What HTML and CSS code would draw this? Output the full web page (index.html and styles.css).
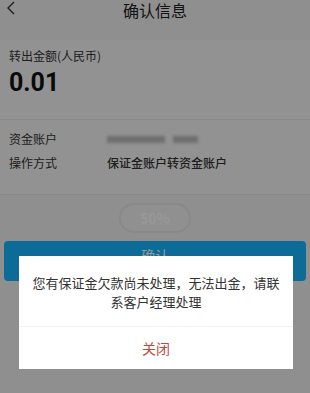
FILE: index.html
```html
<!DOCTYPE html>
<html lang="zh">
<head>
<meta charset="utf-8">
<link rel="stylesheet" href="styles.css">
</head>
<body>
<div class="page">
  <header class="nav">
    <svg class="back" width="10" height="14" viewBox="0 0 10 14"><path d="M8 1 L2 7 L8 13" fill="none" stroke="#333" stroke-width="1.4"/></svg>
    <div class="title">确认信息</div>
  </header>
  <section class="card amount">
    <div class="label">转出金额(人民币)</div>
    <div class="value">0.01</div>
  </section>
  <section class="card info">
    <div class="row"><span class="k">资金账户</span><span class="v"><span class="blur b1"></span><span class="blur b2"></span></span></div>
    <div class="row"><span class="k">操作方式</span><span class="v strong">保证金账户转资金账户</span></div>
  </section>
  <div class="progress"><span class="pill">50%</span></div>
  <div class="btn-wrap"><button class="confirm">确认</button></div>
</div>
<div class="mask"></div>
<div class="dialog">
  <div class="msg">您有保证金欠款尚未处理，无法出金，请联系客户经理处理</div>
  <div class="close">关闭</div>
</div>
</body>
</html>
```
FILE: styles.css
```css
* { box-sizing: border-box; }
html, body { margin: 0; padding: 0; }
body {
  width: 310px;
  height: 393px;
  overflow: hidden;
  background: #eeeeee;
  font-family: "Noto Sans CJK SC", "Noto Sans", sans-serif;
  color: #333;
}
.page { display: flex; flex-direction: column; }
.nav {
  height: 28px;
  position: relative;
  display: flex;
  align-items: flex-start;
  justify-content: center;
  background: #efefef;
}
.back { position: absolute; left: 6px; top: 1px; }
.title { font-size: 16px; line-height: 18px; padding-top: 1px; color: #222; }
.card { background: #f3f3f3; }
.amount {
  margin-top: 12px;
  padding: 8px 9px 0;
  height: 80px;
  border-bottom: 1px solid #e4e4e4;
}
.label { font-size: 12px; line-height: 16px; color: #333; }
.value { font-size: 25px; font-weight: 700; line-height: 30px; margin-top: 4px; color: #111; font-family: "Roboto", "Noto Sans", sans-serif; }
.info { padding: 7px 9px 0; height: 75px; border-bottom: 1px solid #e4e4e4; }
.row { display: flex; font-size: 12px; line-height: 24px; }
.k { width: 98px; color: #333; }
.v { color: #333; display: flex; align-items: center; }
.strong { font-weight: 500; }
.blur { display: inline-block; height: 7px; background: #b9b9b9; filter: blur(1.5px); }
.b1 { width: 58px; margin-right: 8px; }
.b2 { width: 25px; }
.progress { display: flex; justify-content: center; padding-top: 8px; }
.pill {
  width: 72px; height: 30px;
  border: 2px solid #e4e4e4;
  border-radius: 15px;
  display: flex; align-items: center; justify-content: center;
  color: #fdfdfd;
  font-size: 14px;
  font-weight: 700;
  background: #f0f0f0;
}
.btn-wrap { padding: 8px 4px 0 4px; }
.confirm {
  width: 100%;
  height: 40px;
  border: none;
  border-radius: 4px;
  background: #15b3fc;
  color: #fff;
  font-size: 14px;
  font-family: inherit;
  padding: 0 0 12px;
}
.mask { position: fixed; inset: 0; background: rgba(0,0,0,0.4); }
.dialog {
  position: fixed;
  left: 19px; top: 256px;
  width: 274px;
  background: #fff;
  display: flex; flex-direction: column;
}
.msg {
  font-size: 13px;
  line-height: 19px;
  color: #333;
  text-align: center;
  padding: 17px 10px 15px;
  height: 71px;
  border-bottom: 1px solid #f2f2f2;
}
.close {
  height: 42px;
  display: flex; align-items: center; justify-content: center;
  color: #c4463f;
  font-size: 14px;
}
```
